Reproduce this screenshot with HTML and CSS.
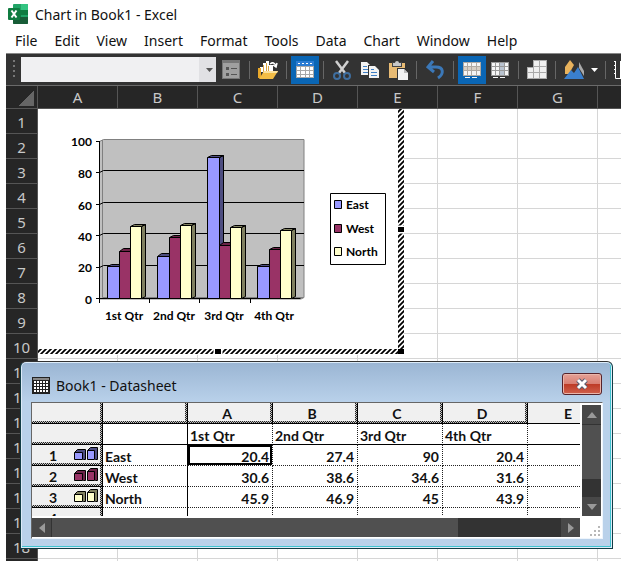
FILE: index.html
```html
<!DOCTYPE html>
<html lang="en">
<head>
    <meta charset="UTF-8">
    <meta name="viewport" content="width=device-width, initial-scale=1.0">
    <title>Chart in Book1 - Excel</title>
    <link rel="stylesheet" href="styles.css">
</head>
<body>
    <header class="title-bar">
        <svg class="app-icon" width="20" height="20" viewBox="0 0 20 20">
            <path fill="#21a366" d="M6 0h13a1 1 0 0 1 1 1v18a1 1 0 0 1-1 1H6a1 1 0 0 1-1-1V1a1 1 0 0 1 1-1z"/>
            <path fill="#33c481" d="M13 0h6a1 1 0 0 1 1 1v5h-7z"/>
            <path fill="#107c41" d="M13 6h7v5h-7zM5 6h8v9H5z"/>
            <path fill="#185c37" d="M5 13h15v6a1 1 0 0 1-1 1H6a1 1 0 0 1-1-1z"/>
            <rect y="4" width="12" height="12" rx="1" fill="#107c41"/>
            <path stroke="#fff" stroke-width="2" d="M3.500 6.500l5 7M8.500 6.500l-5 7"/>
        </svg>
        <span>Chart in Book1 - Excel</span>
    </header>

    <nav class="menu">
        <a href="#">File</a>
        <a href="#">Edit</a>
        <a href="#">View</a>
        <a href="#">Insert</a>
        <a href="#">Format</a>
        <a href="#">Tools</a>
        <a href="#">Data</a>
        <a href="#">Chart</a>
        <a href="#">Window</a>
        <a href="#">Help</a>
    </nav>

    <div class="toolbar">
        <span class="grip"></span>
        <div class="combo">
            <select aria-label="Chart objects"><option></option></select>
            <svg class="combo-arrow" width="17" height="25" viewBox="0 0 17 25"><path fill="#e1e1e4" d="M0 0h17v25H0z"/><path fill="#555" d="M7 11h7l-3.500 4z"/></svg>
        </div>
        <button class="tool" aria-label="Format object">
            <svg width="20" height="20" viewBox="0 0 20 20"><path fill="#777" d="M1 0h18v19H1z"/><path fill="#a0a0a0" d="M2 3h16v15H2z"/><path fill="#555" d="M5 7h3v3H5zM5 13h3v3H5zM10 8h6v1h-6zM10 14h6v1h-6z"/></svg>
        </button>
        <span class="sep"></span>
        <button class="tool" aria-label="Import file">
            <svg width="20" height="20" viewBox="0 0 20 20"><path fill="#fff" d="M2 7h3V3h3V1h3v4h4v7H2z"/><path fill="#e9a82a" d="M0 8h3v10H0z"/><path fill="#d9a441" d="M5 5h1v7H5zM8 3h1v8H8zM10 6h1v5h-1z"/><path fill="#f3bd45" d="M6 11h14l-5 8H1z"/><path fill="#fbe19b" d="M6 11h14l-1 2H5z"/><path fill="none" stroke="#fff" stroke-width="1.500" d="M12 4q4-3 6 2M15 5l3 2 1-4"/></svg>
        </button>
        <span class="sep"></span>
        <button class="tool active" aria-label="View datasheet">
            <svg width="20" height="20" viewBox="0 0 20 20"><path fill="#a8a8a8" d="M1 1h18v17H1z"/><path fill="#2b7cd3" d="M1 1h18v5H1z"/><path fill="#fff" d="M3 3h2v1H3zM7 3h2v1H7zM11 3h2v1h-2zM15 3h2v1h-2z"/><path fill="#fff" d="M2 7h3v3H2zM6 7h4v3H6zM11 7h3v3h-3zM15 7h3v3h-3zM2 11h3v3H2zM6 11h4v3H6zM11 11h3v3h-3zM15 11h3v3h-3zM2 15h3v2H2zM6 15h4v2H6zM11 15h3v2h-3zM15 15h3v2h-3z"/></svg>
        </button>
        <span class="sep"></span>
        <button class="tool" aria-label="Cut">
            <svg width="20" height="20" viewBox="0 0 20 20"><path fill="none" stroke="#d0d0d0" stroke-width="2.500" d="M4 1l9 12M16 1L7 13"/><g fill="none" stroke="#3f6e9f" stroke-width="2"><circle cx="5" cy="16" r="3"/><circle cx="15" cy="16" r="3"/></g></svg>
        </button>
        <button class="tool" aria-label="Copy">
            <svg width="20" height="20" viewBox="0 0 20 20"><path fill="#f2f2f2" d="M1 2h6l3 3v10H1z"/><path fill="#3f7fc4" d="M3 6h4v1H3zM3 9h5v1H3zM3 12h5v1H3z"/><path fill="#333" d="M8 5h8l4 4v10H8z"/><path fill="#f2f2f2" d="M9 6h6l4 4v8H9z"/><path fill="#3f7fc4" d="M11 9h3v1h-3zM11 12h6v1h-6zM11 15h6v1h-6z"/></svg>
        </button>
        <button class="tool" aria-label="Paste">
            <svg width="20" height="20" viewBox="0 0 20 20"><path fill="#e8bb74" d="M1 3h16v15H1z"/><path fill="#444" d="M4 2h10v5H4z"/><path fill="#c8c8c8" d="M5 3h2a2 2 0 0 1 4 0h2v3H5z"/><path fill="#333" d="M9 8h8l3 3v9H9z"/><path fill="#f2f2f2" d="M10 9h6l4 4v7H10z"/><path fill="#bbb" d="M16 9v4h4z"/></svg>
        </button>
        <span class="sep"></span>
        <button class="tool" aria-label="Undo">
            <svg width="20" height="20" viewBox="0 0 20 20"><path fill="none" stroke="#3b78b8" stroke-width="3" d="M8 1L3 7l6 5M3 7h8c8 0 8 7 2 11"/></svg>
        </button>
        <span class="sep"></span>
        <button class="tool active" aria-label="By row">
            <svg width="20" height="20" viewBox="0 0 20 20"><path fill="#b0aaa3" d="M1 2h18v14H1z"/><path fill="#f5f5f5" d="M2 3h3v3H2zM6 3h3v3H6zM10 3h4v3h-4zM15 3h3v3h-3zM2 11h3v4H2zM6 11h3v4H6zM10 11h4v4h-4zM15 11h3v4h-3z"/><path fill="#d8cfc4" d="M2 7h3v3H2zM6 7h3v3H6zM10 7h4v3h-4zM15 7h3v3h-3z"/><path fill="#f5f5f5" d="M3 17h5v1H3zM10 17h5v1h-5z"/></svg>
        </button>
        <button class="tool" aria-label="By column">
            <svg width="20" height="20" viewBox="0 0 20 20"><path fill="#999" d="M1 2h18v14H1z"/><path fill="#f5f5f5" d="M2 3h3v3H2zM6 3h3v3H6zM2 7h3v3H2zM6 7h3v3H6zM2 11h3v4H2zM6 11h3v4H6zM15 3h3v3h-3zM15 7h3v3h-3zM15 11h3v4h-3z"/><path fill="#b9c3d0" d="M10 3h4v3h-4zM10 7h4v3h-4zM10 11h4v4h-4z"/><path fill="#f5f5f5" d="M3 17h5v1H3zM10 17h5v1h-5z"/></svg>
        </button>
        <span class="sep"></span>
        <button class="tool" aria-label="Data table">
            <svg width="20" height="20" viewBox="0 0 20 20"><path fill="#aaa" d="M6 0h14v19H0V7h6z"/><path fill="#f0f0f0" d="M7 1h5v5H7zM13 1h6v5h-6zM1 8h5v4H1zM7 7h5v5H7zM13 7h6v5h-6zM1 13h5v5H1zM7 13h5v5H7zM13 13h6v5h-6z"/></svg>
        </button>
        <span class="sep"></span>
        <button class="tool" aria-label="Chart type">
            <svg width="20" height="20" viewBox="0 0 20 20"><path fill="#e8b25c" d="M6 0l4 5-5 9H1V7z"/><path fill="#aaa" d="M15 2l5 9v5l-5-8z"/><path fill="#3a7fcd" d="M0 19l7-9 3 3 4-6 6 12z"/></svg>
        </button>
        <button class="tool caret" aria-label="Chart type options">
            <svg width="7" height="4" viewBox="0 0 7 4"><path fill="#fff" d="M0 0h7L3.500 4z"/></svg>
        </button>
        <span class="sep"></span>
        <button class="tool" aria-label="Category axis gridlines">
            <svg width="20" height="20" viewBox="0 0 20 20"><path fill="none" stroke="#fff" d="M1.500 1v17.500H20M6.500 1v17M12.500 1v17M-1 1.500h2M-1 5.500h2M-1 9.500h2M-1 13.500h2"/></svg>
        </button>
    </div>

    <main class="sheet">
        <table class="grid">
            <thead>
                <tr><th class="corner"></th><th>A</th><th>B</th><th>C</th><th>D</th><th>E</th><th>F</th><th>G</th><th></th></tr>
            </thead>
            <tbody>
                <tr><th>1</th><td></td><td></td><td></td><td></td><td></td><td></td><td></td><td></td></tr>
                <tr><th>2</th><td></td><td></td><td></td><td></td><td></td><td></td><td></td><td></td></tr>
                <tr><th>3</th><td></td><td></td><td></td><td></td><td></td><td></td><td></td><td></td></tr>
                <tr><th>4</th><td></td><td></td><td></td><td></td><td></td><td></td><td></td><td></td></tr>
                <tr><th>5</th><td></td><td></td><td></td><td></td><td></td><td></td><td></td><td></td></tr>
                <tr><th>6</th><td></td><td></td><td></td><td></td><td></td><td></td><td></td><td></td></tr>
                <tr><th>7</th><td></td><td></td><td></td><td></td><td></td><td></td><td></td><td></td></tr>
                <tr><th>8</th><td></td><td></td><td></td><td></td><td></td><td></td><td></td><td></td></tr>
                <tr><th>9</th><td></td><td></td><td></td><td></td><td></td><td></td><td></td><td></td></tr>
                <tr><th>10</th><td></td><td></td><td></td><td></td><td></td><td></td><td></td><td></td></tr>
                <tr><th>11</th><td></td><td></td><td></td><td></td><td></td><td></td><td></td><td></td></tr>
                <tr><th>12</th><td></td><td></td><td></td><td></td><td></td><td></td><td></td><td></td></tr>
                <tr><th>13</th><td></td><td></td><td></td><td></td><td></td><td></td><td></td><td></td></tr>
                <tr><th>14</th><td></td><td></td><td></td><td></td><td></td><td></td><td></td><td></td></tr>
                <tr><th>15</th><td></td><td></td><td></td><td></td><td></td><td></td><td></td><td></td></tr>
                <tr><th>16</th><td></td><td></td><td></td><td></td><td></td><td></td><td></td><td></td></tr>
                <tr><th>17</th><td></td><td></td><td></td><td></td><td></td><td></td><td></td><td></td></tr>
                <tr><th>18</th><td></td><td></td><td></td><td></td><td></td><td></td><td></td><td></td></tr>
                <tr><th></th><td></td><td></td><td></td><td></td><td></td><td></td><td></td><td></td></tr>
            </tbody>
        </table>

        <svg class="chart" width="366" height="246" viewBox="38 109 366 246">
            <defs>
                <pattern id="hatch" width="5" height="5" patternUnits="userSpaceOnUse">
                    <path stroke="#000" stroke-width="1.800" d="M-1 6L6 -1M-1 1L1 -1M4 6L6 4"/>
                </pattern>
            </defs>
            <path fill="#fff" d="M38 109h366v246H38z"/>
            <!-- walls and floor -->
            <path fill="#c0c0c0" stroke="#808080" d="M99.500 141.500l4-2h200.500v158l-3 1.500H99.500z"/>
            <path fill="none" stroke="#808080" d="M102.500 140v157.500h201"/>
            <path fill="none" stroke="#000" d="M99.500 172.500l4-2H304M99.500 204.500l4-2H304M99.500 235.500l4-2H304M99.500 267.500l4-2H304"/>
            <path fill="none" stroke="#000" d="M99.500 141v162M96 141.500h4M96 172.500h4M96 204.500h4M96 235.500h4M96 267.500h4M96 298.500h204.500M149.500 298v5M199.500 298v5M250.500 298v5"/>
            <!-- bars: side, top, face -->
            <g stroke="#000" stroke-linejoin="round">
                <g fill="#4d4d80">
                    <path d="M119.500 298.500v-32l4-2v32zM107.500 266.500l4-2h12l-4 2z"/>
                    <path d="M169.500 298.500v-42l4-3v43zM157.500 256.500l4-3h12l-4 3z"/>
                    <path d="M219.500 298.500v-141l4-2v141zM207.500 157.500l4-2h12l-4 2z"/>
                    <path d="M269.500 298.500v-32l4-2v32zM257.500 266.500l4-2h12l-4 2z"/>
                </g>
                <g fill="#9999ff">
                    <path d="M107.500 266.500h12v32h-12z"/>
                    <path d="M157.500 256.500h12v42h-12z"/>
                    <path d="M207.500 157.500h12v141h-12z"/>
                    <path d="M257.500 266.500h12v32h-12z"/>
                </g>
                <g fill="#6b2347">
                    <path d="M130.500 298.500v-47l4-3v48zM119.500 251.500l4-3h11l-4 3z"/>
                    <path d="M180.500 298.500v-61l4-2v61zM169.500 237.500l4-2h11l-4 2z"/>
                    <path d="M230.500 298.500v-53l4-3v54zM219.500 245.500l4-3h11l-4 3z"/>
                    <path d="M280.500 298.500v-49l4-2v49zM269.500 249.500l4-2h11l-4 2z"/>
                </g>
                <g fill="#993366">
                    <path d="M119.500 251.500h11v47h-11z"/>
                    <path d="M169.500 237.500h11v61h-11z"/>
                    <path d="M219.500 245.500h11v53h-11z"/>
                    <path d="M269.500 249.500h11v49h-11z"/>
                </g>
                <g fill="#808060">
                    <path d="M141.500 298.500v-72l4-2v72zM130.500 226.500l4-2h11l-4 2z"/>
                    <path d="M191.500 298.500v-73l4-2v73zM180.500 225.500l4-2h11l-4 2z"/>
                    <path d="M241.500 298.500v-71l4-2v71zM230.500 227.500l4-2h11l-4 2z"/>
                    <path d="M291.500 298.500v-68l4-2v68zM280.500 230.500l4-2h11l-4 2z"/>
                </g>
                <g fill="#ffffcc">
                    <path d="M130.500 226.500h11v72h-11z"/>
                    <path d="M180.500 225.500h11v73h-11z"/>
                    <path d="M230.500 227.500h11v71h-11z"/>
                    <path d="M280.500 230.500h11v68h-11z"/>
                </g>
            </g>
            <g class="chart-text" text-anchor="end">
                <text x="92" y="146">100</text>
                <text x="92" y="178">80</text>
                <text x="92" y="210">60</text>
                <text x="92" y="241">40</text>
                <text x="92" y="272">20</text>
                <text x="92" y="304">0</text>
            </g>
            <g class="chart-text" text-anchor="middle">
                <text x="124" y="320">1st Qtr</text>
                <text x="174" y="320">2nd Qtr</text>
                <text x="224" y="320">3rd Qtr</text>
                <text x="274" y="320">4th Qtr</text>
            </g>
            <path fill="#fff" stroke="#000" d="M330.500 193.500h55v71h-55z"/>
            <g stroke="#000">
                <path fill="#9999ff" d="M334.500 200.500h7v8h-7z"/>
                <path fill="#993366" d="M334.500 224.500h7v8h-7z"/>
                <path fill="#ffffcc" d="M334.500 247.500h7v8h-7z"/>
            </g>
            <g class="chart-text">
                <text x="346" y="209">East</text>
                <text x="346" y="233">West</text>
                <text x="346" y="256">North</text>
            </g>
            <!-- selection frame -->
            <path fill="url(#hatch)" d="M38 349h360v5H38zM398 109h6v240h-6z"/>
            <path stroke="#fff" fill="#fff" d="M214 349h8v5h-8zM398 226h6v7h-6z"/>
            <path d="M215 349h6v5h-6zM398 227h6v5h-6zM398 349h6v5h-6z"/>
        </svg>

        <section class="datasheet">
            <div class="ds-title">
                <svg width="18" height="17" viewBox="0 0 18 17"><path fill="#222" d="M0 0h18v17H0z"/><path fill="#888" d="M1 1h16v2H1z"/><path fill="#fff" d="M2 4h2v2H2zM5 4h2v2H5zM8 4h2v2H8zM11 4h2v2h-2zM14 4h2v2h-2zM2 7h2v2H2zM5 7h2v2H5zM8 7h2v2H8zM11 7h2v2h-2zM14 7h2v2h-2zM2 10h2v2H2zM5 10h2v2H5zM8 10h2v2H8zM11 10h2v2h-2zM14 10h2v2h-2zM2 13h2v2H2zM5 13h2v2H5zM8 13h2v2H8zM11 13h2v2h-2zM14 13h2v2h-2z"/></svg>
                <h2>Book1 - Datasheet</h2>
                <button class="close" aria-label="Close">
                    <svg width="14" height="12" viewBox="0 0 14 12"><path stroke="#555b70" stroke-width="5" d="M3 2l8 8M11 2l-8 8"/><path stroke="#fff" stroke-width="3" d="M3 2l8 8M11 2l-8 8"/></svg>
                </button>
            </div>
            <div class="ds-body">
                <div class="ds-view">
                    <table class="ds-table">
                        <thead>
                            <tr><th class="ds-row"></th><th></th><th>A</th><th>B</th><th>C</th><th>D</th><th class="last">E</th></tr>
                        </thead>
                        <tbody>
                            <tr class="names"><th></th><td></td><td>1st Qtr</td><td>2nd Qtr</td><td>3rd Qtr</td><td>4th Qtr</td><td></td></tr>
                            <tr>
                                <th><span class="row-head">1 <svg width="24" height="14" viewBox="0 0 24 14"><g stroke="#000"><path fill="#4d4d80" d="M.5 5.500l3-3h8v10h-2zM13.500 3.500l3-3h7v12h-2z"/><path fill="#9999ff" d="M.5 5.500h8v7h-8zM13.500 3.500h7v9h-7z"/></g></svg></span></th>
                                <td>East</td><td class="selected">20.4</td><td>27.4</td><td>90</td><td>20.4</td><td></td>
                            </tr>
                            <tr>
                                <th><span class="row-head">2 <svg width="24" height="14" viewBox="0 0 24 14"><g stroke="#000"><path fill="#6b2347" d="M.5 5.500l3-3h8v10h-2zM13.500 3.500l3-3h7v12h-2z"/><path fill="#993366" d="M.5 5.500h8v7h-8zM13.500 3.500h7v9h-7z"/></g></svg></span></th>
                                <td>West</td><td>30.6</td><td>38.6</td><td>34.6</td><td>31.6</td><td></td>
                            </tr>
                            <tr>
                                <th><span class="row-head">3 <svg width="24" height="14" viewBox="0 0 24 14"><g stroke="#000"><path fill="#808060" d="M.5 5.500l3-3h8v10h-2zM13.500 3.500l3-3h7v12h-2z"/><path fill="#ffffcc" d="M.5 5.500h8v7h-8zM13.500 3.500h7v9h-7z"/></g></svg></span></th>
                                <td>North</td><td>45.9</td><td>46.9</td><td>45</td><td>43.9</td><td></td>
                            </tr>
                            <tr><th><span class="row-head">4</span></th><td></td><td></td><td></td><td></td><td></td><td></td></tr>
                        </tbody>
                    </table>
                </div>
                <div class="scroll vertical">
                    <button aria-label="Scroll up"><svg width="10" height="6" viewBox="0 0 10 6"><path fill="#999" d="M0 6l5-6 5 6z"/></svg></button>
                    <span class="thumb"></span>
                    <button aria-label="Scroll down"><svg width="10" height="6" viewBox="0 0 10 6"><path fill="#999" d="M0 0l5 6 5-6z"/></svg></button>
                </div>
                <div class="scroll horizontal">
                    <button aria-label="Scroll left"><svg width="6" height="10" viewBox="0 0 6 10"><path fill="#999" d="M6 0L0 5l6 5z"/></svg></button>
                    <span class="thumb"></span>
                    <button aria-label="Scroll right"><svg width="6" height="10" viewBox="0 0 6 10"><path fill="#999" d="M0 0l6 5-6 5z"/></svg></button>
                </div>
                <svg class="resize" width="12" height="12" viewBox="0 0 12 12"><path fill="#b8b8b8" d="M9 1h2v2H9zM9 5h2v2H9zM5 5h2v2H5zM9 9h2v2H9zM5 9h2v2H5zM1 9h2v2H1z"/></svg>
            </div>
        </section>
    </main>
</body>
</html>
```
FILE: styles.css
```css
* {
    box-sizing: border-box;
}
body {
    display: flex;
    flex-direction: column;
    height: 100vh;
    margin: 0;
    padding: 0 13px 1px 6px;
    overflow: hidden;
    background: #fff;
    color: #111;
    font-family: "Noto Sans", "Open Sans", sans-serif;
    font-size: 14px;
}
button {
    display: flex;
    align-items: center;
    justify-content: center;
    flex: none;
    padding: 0;
    border: none;
    background: none;
}
.title-bar {
    display: flex;
    align-items: center;
    gap: 7px;
    height: 28px;
    padding-left: 2px;
}
.menu {
    display: flex;
    gap: 17px;
    height: 25px;
    padding-left: 9px;
    line-height: 26px;
}
.menu a {
    color: #111;
    text-decoration: none;
}

/* Toolbar */
.toolbar {
    display: flex;
    align-items: center;
    height: 33px;
    padding-left: 7px;
    overflow: hidden;
    background: #333;
    border-top: 1px solid #888;
    border-bottom: 1px solid #6a6a6a;
}
.grip {
    flex: none;
    width: 2px;
    height: 20px;
    margin-right: 6px;
    background: repeating-linear-gradient(#777 0 2px, transparent 2px 5px);
}
.combo {
    display: flex;
    flex: none;
    width: 195px;
    height: 25px;
    margin-right: 1px;
    background: #f0f0f2;
}
.combo select {
    flex: 1;
    appearance: none;
    border: none;
    background: none;
}
.combo-arrow {
    pointer-events: none;
}
.tool {
    width: 28px;
    height: 28px;
}
.tool.active {
    background: #0a66b5;
}
.tool.caret {
    width: 13px;
}
.sep {
    flex: none;
    width: 1px;
    height: 18px;
    margin: 0 4px;
    background: #666;
}

/* Worksheet */
.sheet {
    position: relative;
    flex: 1;
    overflow: hidden;
}
.grid {
    width: 672px;
    table-layout: fixed;
    border-collapse: separate;
    border-spacing: 0;
}
.grid th,
.grid td {
    width: 80px;
    height: 25px;
    padding: 0;
    border-right: 1px solid #d6d6d6;
    border-bottom: 1px solid #d6d6d6;
}
.grid th {
    padding-top: 2px;
    background: #262626;
    border-color: #555;
    color: #c8c8c8;
    font-size: 15px;
    font-weight: 400;
    line-height: 20px;
}
.grid thead th {
    height: 23px;
    padding-top: 0;
}
.grid tr > :first-child {
    width: 32px;
}
.grid .corner {
    background: linear-gradient(135deg, #262626 50%, #666 50%) right 3px bottom 2px / 15px 15px no-repeat #262626;
}
.chart {
    position: absolute;
    top: 23px;
    left: 32px;
}
.chart-text {
    font-family: Lato, sans-serif;
    font-size: 12px;
    font-weight: 700;
}

/* Datasheet window */
.datasheet {
    position: absolute;
    top: 275px;
    left: 14px;
    right: 8px;
    padding: 0 9px 9px 10px;
    background: linear-gradient(#9ab5d3, #b9d1ea 40px);
    border: 1px solid #123c46;
    border-top-color: #333;
    border-radius: 6px 6px 0 0;
    box-shadow: inset 0 0 0 1px #dcebf8, inset -1px -1px 0 1px #3fc3d0;
}
.ds-title {
    display: flex;
    align-items: center;
    gap: 6px;
    height: 40px;
    padding: 7px 1px 0 1px;
}
.ds-title h2 {
    flex: 1;
    margin: 0;
    font-size: 14px;
    font-weight: 400;
}
.close {
    width: 40px;
    height: 22px;
    margin-bottom: 3px;
    background: linear-gradient(#e5a197, #d98073 48%, #bd3a25 50%, #d0604c);
    border: 1px solid #56232b;
    border-radius: 3px;
    box-shadow: inset 0 0 0 1px #eab5aa;
}
.ds-body {
    display: grid;
    grid-template-columns: 1fr 19px;
    grid-template-rows: 113px 19px;
    gap: 2px;
    padding: 0 1px 1px 0;
    background: #fff;
    border: 1px solid #666;
    border-right-color: #eef5fc;
    border-bottom-color: #eef5fc;
}
.ds-view {
    overflow: hidden;
}
.ds-table {
    width: 100%;
    table-layout: fixed;
    border-collapse: separate;
    border-spacing: 0;
    font-family: Lato, sans-serif;
    font-size: 14px;
    font-weight: 700;
    line-height: 17px;
}
.ds-table th,
.ds-table td {
    width: 85px;
    height: 21px;
    padding: 3px 3px 0 2px;
    overflow: hidden;
    white-space: nowrap;
    text-align: right;
    border-right: 1px dotted #222;
    border-bottom: 1px dotted #222;
}
.ds-table th {
    padding: 1px 8px 0 2px;
    text-align: center;
    background:
        repeating-conic-gradient(#222 0 25%, #ccc 0 50%) right / 2px 2px repeat-y,
        repeating-conic-gradient(#222 0 25%, #ccc 0 50%) bottom / 2px 2px repeat-x,
        #f0f0f0;
    border-right: 1px solid #000;
    border-bottom: 1px solid #000;
}
.ds-table .ds-row {
    width: 71px;
}
.ds-table .last {
    width: auto;
    text-align: right;
    background: #f0f0f0;
    border-right: none;
}
.ds-table td:last-child {
    border-right: none;
}
.ds-table td:nth-child(2) {
    text-align: left;
    border-right: 1px solid #000;
}
.ds-table .names td {
    text-align: left;
    border-bottom: 1px solid #000;
}
.ds-table .selected {
    box-shadow: inset 0 0 0 2px #000;
}
.row-head {
    display: flex;
    justify-content: space-between;
    padding-left: 15px;
    margin-right: -4px;
}
.scroll {
    display: flex;
    background: #333;
}
.scroll button {
    width: 19px;
    height: 19px;
    background: #484848;
}
.thumb {
    background: #505050;
}
.vertical {
    flex-direction: column;
    justify-content: space-between;
    margin-top: 2px;
}
.vertical .thumb {
    height: 54px;
    margin: 1px 0 auto;
}
.horizontal .thumb {
    flex: 0 1 406px;
    margin: 0 auto 0 1px;
}
.resize {
    place-self: end;
}
```
